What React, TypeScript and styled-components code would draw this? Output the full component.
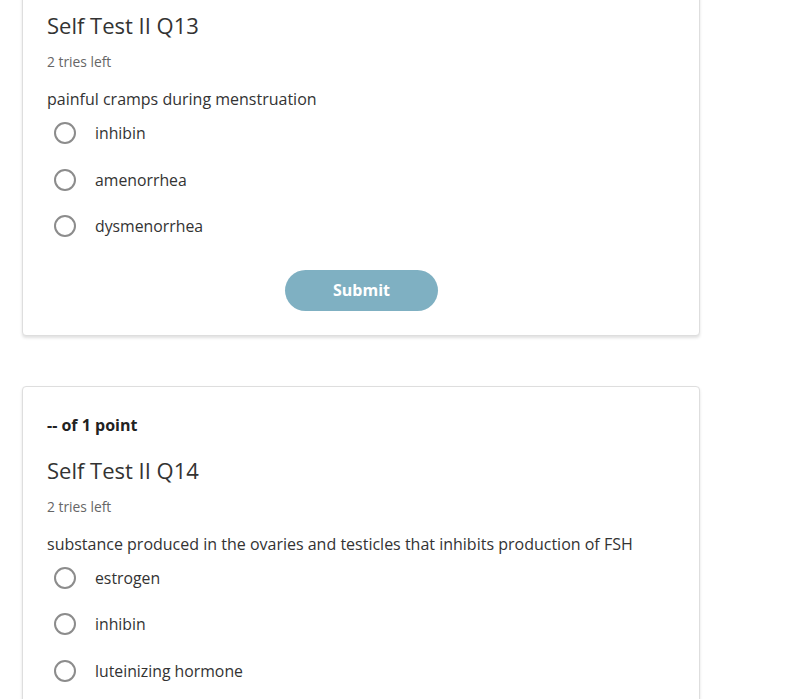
import styled, { createGlobalStyle } from 'styled-components';

const GlobalStyle = createGlobalStyle`
	body {
		margin: 0;
		background: #ffffff;
		font-family: 'Open Sans', 'Liberation Sans', sans-serif;
		color: #333333;
	}
`;

const Page = styled.main`
	display: flex;
	flex-direction: column;
	gap: 50px;
	width: 678px;
	margin: -59px 0 0 22px;
`;

const Card = styled.section`
	display: flex;
	flex-direction: column;
	padding: 28px 24px 24px;
	border: 1px solid #dedede;
	border-radius: 4px;
	background: #ffffff;
	box-shadow: 0 2px 3px rgba(0, 0, 0, 0.12);
`;

const Points = styled.div`
	font-size: 16px;
	line-height: 20px;
	font-weight: 700;
	color: #222222;
`;

const Title = styled.h2`
	margin: 20px 0 0;
	font-size: 22px;
	line-height: 30px;
	font-weight: 400;
	color: #333333;
`;

const Tries = styled.div`
	margin-top: 14px;
	font-size: 13.8px;
	line-height: 16px;
	color: #666666;
`;

const Question = styled.p`
	margin: 19px 0 1px;
	font-size: 16px;
	line-height: 20px;
	color: #333333;
`;

const Options = styled.div`
	display: flex;
	flex-direction: column;
`;

const Option = styled.label`
	display: flex;
	align-items: center;
	gap: 19px;
	height: 46.5px;
	padding-left: 7px;
	font-size: 15.8px;
	color: #333333;
	cursor: pointer;
`;

const Radio = styled.span`
	width: 18px;
	height: 18px;
	border: 2px solid #8c8c8c;
	border-radius: 50%;
	flex-shrink: 0;
`;

const Actions = styled.div`
	display: flex;
	justify-content: center;
	margin-top: 20px;
`;

const SubmitButton = styled.button`
	width: 153px;
	height: 41px;
	margin-left: 1px;
	border: none;
	border-radius: 21px;
	background: #7fb0c2;
	color: #ffffff;
	font-family: inherit;
	font-size: 16px;
	font-weight: 700;
`;

type Item = {
	title: string;
	question: string;
	choices: string[];
};

const items: Item[] = [
	{
		title: 'Self Test II Q13',
		question: 'painful cramps during menstruation',
		choices: ['inhibin', 'amenorrhea', 'dysmenorrhea']
	},
	{
		title: 'Self Test II Q14',
		question:
			'substance produced in the ovaries and testicles that inhibits production of FSH',
		choices: ['estrogen', 'inhibin', 'luteinizing hormone', 'progesterone']
	}
];

function QuestionCard({ item }: { item: Item }) {
	return (
		<Card>
			<Points>-- of 1 point</Points>
			<Title>{item.title}</Title>
			<Tries>2 tries left</Tries>
			<Question>{item.question}</Question>
			<Options>
				{item.choices.map((choice) => (
					<Option key={choice}>
						<Radio />
						{choice}
					</Option>
				))}
			</Options>
			<Actions>
				<SubmitButton>Submit</SubmitButton>
			</Actions>
		</Card>
	);
}

export default function App() {
	return (
		<>
			<GlobalStyle />
			<Page>
				{items.map((item) => (
					<QuestionCard key={item.title} item={item} />
				))}
			</Page>
		</>
	);
}
